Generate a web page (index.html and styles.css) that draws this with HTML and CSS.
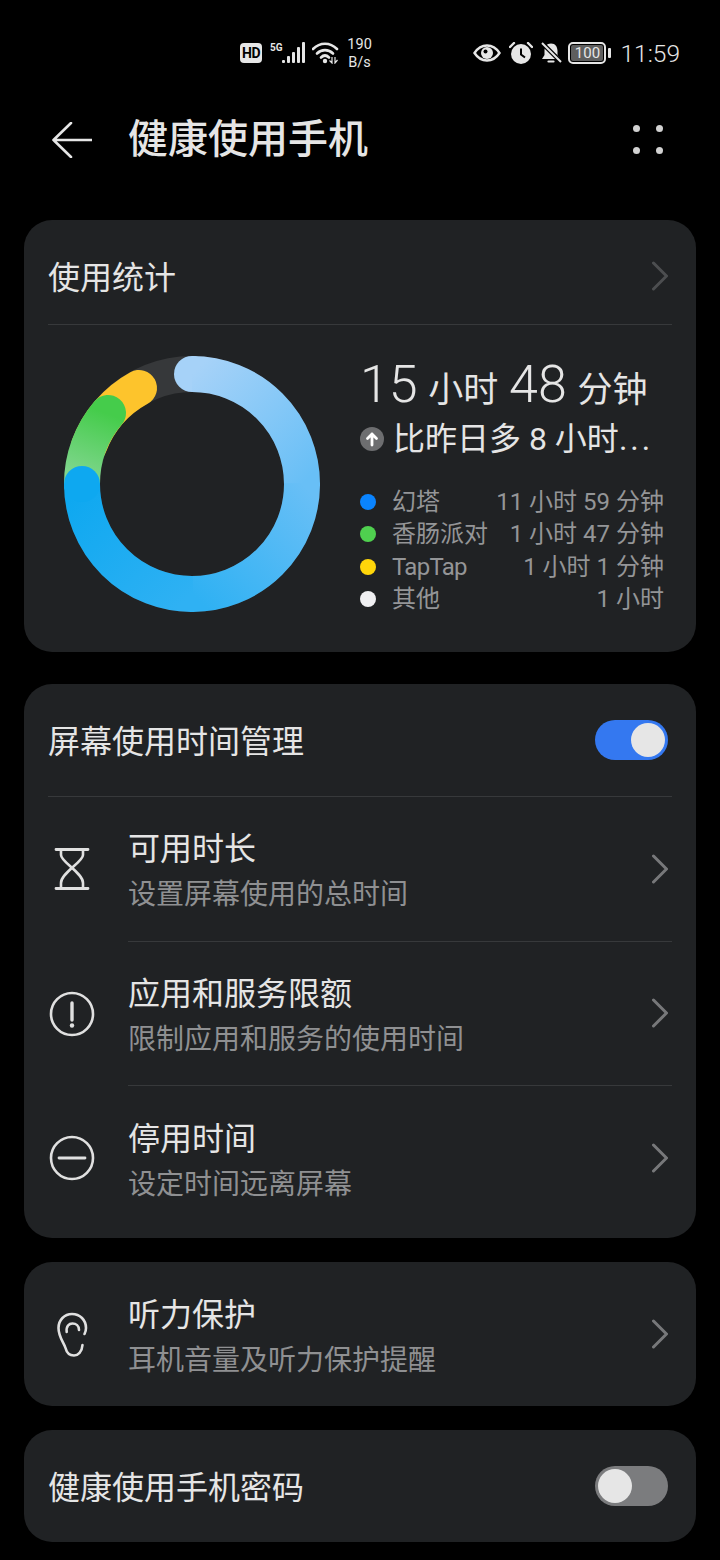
FILE: index.html
```html
<!DOCTYPE html>
<html lang="zh-CN">
<head>
    <meta charset="UTF-8">
    <meta name="viewport" content="width=device-width, initial-scale=1.0">
    <title>健康使用手机</title>
    <link rel="stylesheet" href="styles.css">
</head>
<body>

<div class="status-bar">
    <div class="status-group">
        <span class="hd-badge">HD</span>
        <span class="net-type">5G</span>
        <svg class="signal" width="24" height="22" viewBox="0 0 24 22">
            <rect x="0" y="18" width="3" height="3" rx="1"/>
            <rect x="5" y="14" width="3" height="7" rx="1"/>
            <rect x="10" y="10" width="3" height="11" rx="1"/>
            <rect x="15" y="5" width="3" height="16" rx="1"/>
            <rect x="20" y="0" width="3" height="21" rx="1"/>
        </svg>
        <svg class="wifi" width="27" height="22" viewBox="0 0 27 22">
            <path d="M1 7 C8 0 18 0 25 7" fill="none" stroke="#e6e6e6" stroke-width="2.6" stroke-linecap="round"/>
            <path d="M5 11.500 C9.500 7 16.500 7 21 11.500" fill="none" stroke="#e6e6e6" stroke-width="2.6" stroke-linecap="round"/>
            <path d="M9 15.500 C11.500 13 14.500 13 17 15.500" fill="none" stroke="#e6e6e6" stroke-width="2.6" stroke-linecap="round"/>
            <circle cx="13" cy="19" r="2.200" fill="#e6e6e6"/>
            <path d="M20 15 v6 l-2.500 -2.500 M23 15 v6 l2.500 -3" fill="none" stroke="#e6e6e6" stroke-width="1.200"/>
        </svg>
        <span class="net-speed">190<br>B/s</span>
    </div>
    <div class="status-group">
        <svg class="eye" width="28" height="18" viewBox="0 0 28 18">
            <path d="M1.500 9 C8 -1 20 -1 26.500 9 C20 19 8 19 1.500 9 Z" fill="none" stroke="#e6e6e6" stroke-width="2.400"/>
            <circle cx="14" cy="9" r="6" fill="#e6e6e6"/>
            <circle cx="12.500" cy="7.500" r="2" fill="#000"/>
        </svg>
        <svg class="alarm" width="24" height="22" viewBox="0 0 24 22">
            <circle cx="12" cy="12" r="10" fill="#e6e6e6"/>
            <path d="M1 5 L5 1 M23 5 L19 1" stroke="#e6e6e6" stroke-width="2.400" stroke-linecap="round"/>
            <path d="M12 6.500 V12.500 L16 15.500" fill="none" stroke="#000" stroke-width="2"/>
        </svg>
        <svg class="bell" width="22" height="22" viewBox="0 0 22 22">
            <path d="M11 1.500 C15.500 1.500 17.500 5 17.500 9 V13 L20 17 H2 L4.500 13 V9 C4.500 5 6.500 1.500 11 1.500 Z" fill="#e6e6e6"/>
            <path d="M8.500 19.500 H13.500" stroke="#e6e6e6" stroke-width="2.200" stroke-linecap="round"/>
            <path d="M2 1 L21 20" stroke="#000" stroke-width="4.500"/>
            <path d="M2 1 L21 20" stroke="#e6e6e6" stroke-width="2"/>
        </svg>
        <div class="battery">
            <span class="battery-body">100</span>
            <span class="battery-nub"></span>
        </div>
        <span class="clock">11:59</span>
    </div>
</div>

<div class="app-header">
    <svg width="40" height="36" viewBox="0 0 40 36">
        <path d="M1.500 18 H39.500 M19 1 L1.500 18 L19 35" fill="none" stroke="#e6e6e6" stroke-width="2.600" stroke-linecap="round" stroke-linejoin="round"/>
    </svg>
    <h1 class="app-title">健康使用手机</h1>
    <div class="more-dots">
        <span></span><span></span><span></span><span></span>
    </div>
</div>

<div class="card usage-card">
    <div class="card-head usage-head divided">
        <span class="head-text">使用统计</span>
        <svg class="chevron dim" width="16" height="30" viewBox="0 0 16 30">
            <path d="M1.500 2 L14.500 15 L1.500 28" fill="none" stroke-width="3" stroke-linecap="round" stroke-linejoin="round"/>
        </svg>
    </div>
    <div class="stats">
        <svg class="ring" width="256" height="256" viewBox="0 0 256 256">
            <defs>
                <linearGradient id="q1" gradientUnits="userSpaceOnUse" x1="128" y1="18" x2="238" y2="128">
                    <stop offset="0" stop-color="#a6d2f8"/><stop offset="1" stop-color="#68bff6"/>
                </linearGradient>
                <linearGradient id="q2" gradientUnits="userSpaceOnUse" x1="238" y1="128" x2="128" y2="238">
                    <stop offset="0" stop-color="#68bff6"/><stop offset="1" stop-color="#2fb1f3"/>
                </linearGradient>
                <linearGradient id="q3" gradientUnits="userSpaceOnUse" x1="128" y1="238" x2="18" y2="128">
                    <stop offset="0" stop-color="#2fb1f3"/><stop offset="1" stop-color="#0ea8f0"/>
                </linearGradient>
                <linearGradient id="greenGrad" gradientUnits="userSpaceOnUse" x1="18" y1="128" x2="44" y2="58">
                    <stop offset="0" stop-color="#85d793"/><stop offset="1" stop-color="#45cc4b"/>
                </linearGradient>
            </defs>
            <circle cx="128" cy="128" r="110" fill="none" stroke="#36383a" stroke-width="36"/>
            <path d="M25 90 A110 110 0 0 1 75 32" fill="none" stroke="#fdc42c" stroke-width="36" stroke-linecap="round"/>
            <path d="M18 128 A110 110 0 0 1 44 57" fill="none" stroke="url(#greenGrad)" stroke-width="36" stroke-linecap="round"/>
            <circle cx="128" cy="18" r="18" fill="#a6d2f8"/>
            <path d="M128 18 A110 110 0 0 1 238 128" fill="none" stroke="url(#q1)" stroke-width="36"/>
            <path d="M238 127 A110 110 0 0 1 127 238" fill="none" stroke="url(#q2)" stroke-width="36"/>
            <path d="M129 238 A110 110 0 0 1 18 128" fill="none" stroke="url(#q3)" stroke-width="36"/>
            <circle cx="18" cy="128" r="18" fill="#0ea8f0"/>
        </svg>
        <div class="stats-info">
            <div class="total"><b>15</b> 小时 <b>48</b> 分钟</div>
            <div class="compare">
                <svg width="24" height="24" viewBox="0 0 24 24">
                    <circle cx="12" cy="12" r="12" fill="#6d6e70"/>
                    <path d="M12 18 V7 M7.500 11.500 L12 7 L16.500 11.500" fill="none" stroke="#fff" stroke-width="2.800" stroke-linecap="round" stroke-linejoin="round"/>
                </svg>
                <span>比昨日多 8 小时<i class="more">...</i></span>
            </div>
            <ul class="legend">
                <li><i class="dot blue"></i><span>幻塔</span><em>11 小时 59 分钟</em></li>
                <li><i class="dot green"></i><span>香肠派对</span><em>1 小时 47 分钟</em></li>
                <li><i class="dot yellow"></i><span class="latin">TapTap</span><em>1 小时 1 分钟</em></li>
                <li><i class="dot white"></i><span>其他</span><em>1 小时</em></li>
            </ul>
        </div>
    </div>
</div>

<div class="card manage-card">
    <div class="card-head divided">
        <span class="head-text">屏幕使用时间管理</span>
        <div class="switch on"><span></span></div>
    </div>
    <div class="item">
        <svg class="item-icon" width="48" height="48" viewBox="0 0 48 48">
            <path d="M8 4.500 H40 M8 43.500 H40" fill="none" stroke="#e0e0e0" stroke-width="2.800" stroke-linecap="round"/>
            <path d="M13 5 V10 C13 17 35 28 35 38 V43 M35 5 V10 C35 17 13 28 13 38 V43" fill="none" stroke="#e0e0e0" stroke-width="2.600"/>
        </svg>
        <div class="item-body">
            <div class="item-text">
                <div class="item-title">可用时长</div>
                <div class="item-sub">设置屏幕使用的总时间</div>
            </div>
            <svg class="chevron" width="16" height="30" viewBox="0 0 16 30">
                <path d="M1.500 2 L14.500 15 L1.500 28" fill="none" stroke-width="3" stroke-linecap="round" stroke-linejoin="round"/>
            </svg>
        </div>
    </div>
    <div class="item">
        <svg class="item-icon" width="48" height="48" viewBox="0 0 48 48">
            <circle cx="24" cy="24" r="21" fill="none" stroke="#e0e0e0" stroke-width="2.600"/>
            <path d="M24 13 L24 30" stroke="#e0e0e0" stroke-width="3.400" stroke-linecap="round"/>
            <circle cx="24" cy="35.500" r="2.200" fill="#e0e0e0"/>
        </svg>
        <div class="item-body">
            <div class="item-text">
                <div class="item-title">应用和服务限额</div>
                <div class="item-sub">限制应用和服务的使用时间</div>
            </div>
            <svg class="chevron" width="16" height="30" viewBox="0 0 16 30">
                <path d="M1.500 2 L14.500 15 L1.500 28" fill="none" stroke-width="3" stroke-linecap="round" stroke-linejoin="round"/>
            </svg>
        </div>
    </div>
    <div class="item">
        <svg class="item-icon" width="48" height="48" viewBox="0 0 48 48">
            <circle cx="24" cy="24" r="21" fill="none" stroke="#e0e0e0" stroke-width="2.600"/>
            <path d="M11 24 H37" stroke="#e0e0e0" stroke-width="2.800" stroke-linecap="round"/>
        </svg>
        <div class="item-body">
            <div class="item-text">
                <div class="item-title">停用时间</div>
                <div class="item-sub">设定时间远离屏幕</div>
            </div>
            <svg class="chevron" width="16" height="30" viewBox="0 0 16 30">
                <path d="M1.500 2 L14.500 15 L1.500 28" fill="none" stroke-width="3" stroke-linecap="round" stroke-linejoin="round"/>
            </svg>
        </div>
    </div>
</div>

<div class="card">
    <div class="item single">
        <svg class="item-icon" width="48" height="48" viewBox="0 0 48 48">
            <path d="M34.500 35 C34 42 30 45.500 26 45.500 C21 45.500 18.500 42 17.500 38 C16 33 10.500 27 10.500 18 C10.500 10 16.500 4 24 4 C32 4 38 10 38 18 C38 20 37.500 22 36.500 24" fill="none" stroke="#e0e0e0" stroke-width="2.600" stroke-linecap="round"/>
            <path d="M18.700 22 C18 16 21 13.500 24.500 13.500 C28 13.500 31 16 31 20" fill="none" stroke="#e0e0e0" stroke-width="2.600" stroke-linecap="round"/>
        </svg>
        <div class="item-body">
            <div class="item-text">
                <div class="item-title">听力保护</div>
                <div class="item-sub">耳机音量及听力保护提醒</div>
            </div>
            <svg class="chevron" width="16" height="30" viewBox="0 0 16 30">
                <path d="M1.500 2 L14.500 15 L1.500 28" fill="none" stroke-width="3" stroke-linecap="round" stroke-linejoin="round"/>
            </svg>
        </div>
    </div>
</div>

<div class="card">
    <div class="card-head">
        <span class="head-text">健康使用手机密码</span>
        <div class="switch"><span></span></div>
    </div>
</div>

</body>
</html>
```

FILE: styles.css
```css
* {
    box-sizing: border-box;
    margin: 0;
    padding: 0;
}
body {
    background-color: #000;
    color: #e5e5e5;
    font-family: Roboto, "Noto Sans CJK SC", sans-serif;
    height: 1560px;
    overflow: hidden;
}

/* status bar */
.status-bar {
    display: flex;
    justify-content: space-between;
    align-items: center;
    height: 76px;
    padding: 30px 40px 0 240px;
    color: #e6e6e6;
}
.status-group {
    display: flex;
    align-items: center;
}
.hd-badge {
    width: 22px;
    height: 20px;
    background-color: #e6e6e6;
    border-radius: 4px;
    color: #000;
    font-size: 14px;
    font-weight: 700;
    letter-spacing: -0.5px;
    line-height: 20px;
    text-align: center;
}
.net-type {
    margin: -12px 0 0 8px;
    font-size: 10px;
    font-weight: 700;
}
.signal {
    margin-left: -1px;
    fill: #e6e6e6;
}
.wifi {
    margin-left: 6px;
}
.net-speed {
    margin: 2px 0 0 8px;
    width: 26px;
    font-size: 14.5px;
    line-height: 18px;
    text-align: center;
}
.alarm {
    margin-left: 8px;
}
.bell {
    margin-left: 7px;
}
.battery {
    display: flex;
    align-items: center;
    margin-left: 6px;
}
.battery-body {
    width: 38px;
    height: 22px;
    border: 2px solid #e6e6e6;
    border-radius: 5px;
    background-color: #5e5e5e;
    background-clip: content-box;
    padding: 1px;
    font-size: 15px;
    line-height: 16px;
    text-align: center;
}
.battery-nub {
    width: 3px;
    height: 10px;
    margin-left: 2px;
    background-color: #e6e6e6;
    border-radius: 1px;
}
.clock {
    margin-left: 9px;
    font-size: 24.5px;
    font-weight: 300;
}

/* header */
.app-header {
    display: flex;
    align-items: center;
    height: 144px;
    padding: 0 57px 16px 52px;
}
.app-title {
    flex: 1;
    margin-left: 36px;
    font-size: 40px;
    font-weight: 500;
    line-height: 48px;
}
.more-dots {
    display: grid;
    grid-template-columns: 7px 7px;
    gap: 15px 16px;
    margin-top: -2px;
}
.more-dots span {
    width: 7px;
    height: 7px;
    background-color: #d2d2d2;
    border-radius: 50%;
}

/* cards */
.card {
    margin: 0 24px 24px;
    padding: 0 24px;
    background-color: #202224;
    border-radius: 28px;
}
.usage-card {
    margin-bottom: 32px;
}
.manage-card {
    padding-bottom: 7.5px;
}
.card-head {
    display: flex;
    justify-content: space-between;
    align-items: center;
    height: 112px;
}
.card-head.divided {
    height: 113px;
    border-bottom: 1px solid #37393b;
}
.card-head.usage-head {
    height: 105px;
    padding-top: 7px;
}
.head-text {
    padding-top: 4px;
    font-size: 32px;
    line-height: 44px;
}
.chevron {
    flex-shrink: 0;
    stroke: #77787a;
    margin-right: 4px;
}
.chevron.dim {
    stroke: #4c4e50;
}

/* usage stats */
.stats {
    display: flex;
    padding: 31px 8px 36.5px 16px;
}
.ring {
    flex-shrink: 0;
}
.stats-info {
    flex: 1;
    margin-left: 40px;
}
.total {
    height: 58px;
    font-size: 35px;
    line-height: 58px;
    white-space: nowrap;
    word-spacing: 2px;
}
.total b {
    font-size: 52px;
    font-weight: 300;
}
.compare {
    display: flex;
    align-items: center;
    gap: 9px;
    margin-top: 3px;
    font-size: 32px;
    line-height: 44px;
    white-space: nowrap;
}
.compare .more {
    font-style: normal;
    letter-spacing: 3px;
}
.legend {
    list-style: none;
    margin-top: 24.5px;
    color: #949597;
    font-size: 24px;
    line-height: 32.5px;
}
.legend li {
    display: flex;
    align-items: center;
}
.legend span {
    flex: 1;
    white-space: nowrap;
}
.legend .latin {
    letter-spacing: -0.7px;
}
.legend em {
    font-style: normal;
    white-space: nowrap;
}
.dot {
    width: 16px;
    height: 16px;
    margin-right: 16px;
    border-radius: 50%;
}
.dot.blue {
    background-color: #0a84ff;
}
.dot.green {
    background-color: #4fd04f;
}
.dot.yellow {
    background-color: #ffd60a;
}
.dot.white {
    background-color: #f0f0f2;
}

/* list rows */
.item {
    display: flex;
    align-items: center;
    height: 144.5px;
}
.item.single {
    height: 144px;
}
.item-icon {
    flex-shrink: 0;
    margin-right: 32px;
}
.item-body {
    flex: 1;
    display: flex;
    align-items: center;
    height: 100%;
    border-bottom: 1px solid #37393b;
}
.item:last-child .item-body {
    border-bottom: none;
}
.item-text {
    flex: 1;
    padding-top: 7px;
}
.item-title {
    font-size: 32px;
    line-height: 44px;
}
.item-sub {
    margin-top: 2px;
    color: #8f9092;
    font-size: 28px;
    line-height: 44px;
}

/* switches */
.switch {
    display: flex;
    align-items: center;
    width: 73px;
    height: 40px;
    margin-right: 4px;
    padding: 0 3px;
    background-color: #7b7c7e;
    border-radius: 20px;
}
.switch.on {
    justify-content: flex-end;
    background-color: #3478f0;
}
.switch span {
    width: 34px;
    height: 34px;
    background-color: #e6e6e6;
    border-radius: 50%;
}
```
